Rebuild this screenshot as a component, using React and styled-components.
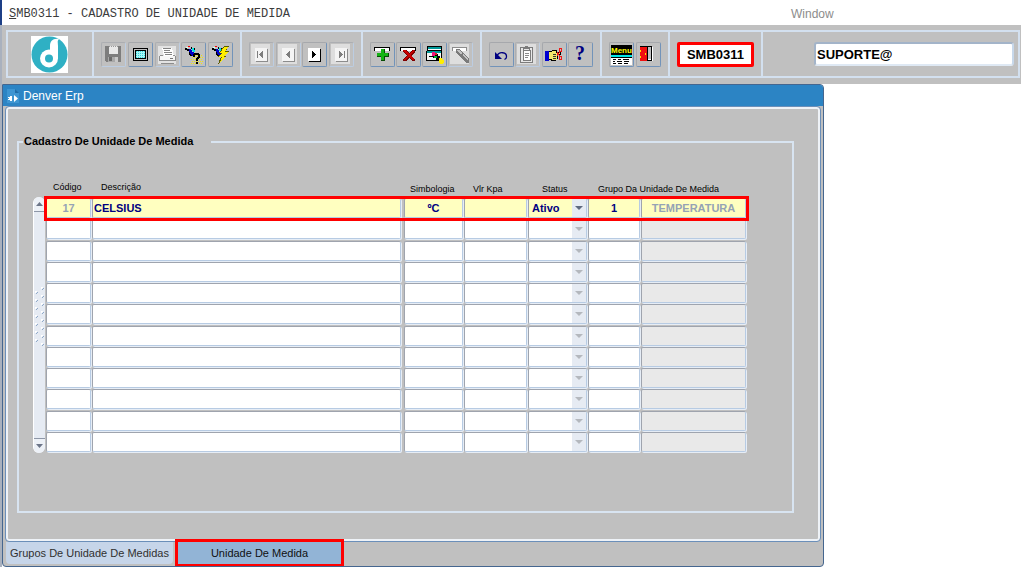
import React from "react";
import styled, { createGlobalStyle, css } from "styled-components";

const GlobalStyle = createGlobalStyle`
    * {
        box-sizing: border-box;
    }
    body {
        margin: 0;
        background: #ffffff;
        color: #000000;
        font-family: "Liberation Sans", Arial, sans-serif;
        font-size: 11px;
    }
    button, input, select {
        font-family: inherit;
        margin: 0;
    }
`;

const Page = styled.div`
    min-height: 100vh;
    border-left: 2px solid #a9b1be;
`;

const MenuBar = styled.header`
    display: grid;
    grid-template-columns: minmax(0, 782fr) minmax(0, 230fr);
    align-items: center;
    height: 25px;
    margin-left: -2px;
    padding: 2px 0 0 7px;
    border-left: 2px solid #1d3f86;
    background: #ffffff;
`;

const ProgramTitle = styled.h1`
    margin: 0;
    font-family: "Liberation Mono", monospace;
    font-size: 12px;
    font-weight: 400;
    line-height: 16px;
    white-space: nowrap;
    color: #3c3c3c;
`;

const WindowMenu = styled.button`
    justify-self: start;
    padding: 0;
    border: 0;
    background: none;
    font-size: 12px;
    line-height: 16px;
    color: #8c8c8c;
`;

const ToolbarArea = styled.div`
    padding: 5px 1px 6px 4px;
    background: #c0c0c0;
`;

const Toolbar = styled.div`
    display: flex;
    height: 48px;
    border: 2px solid #d3e0ef;
    border-left: 0;
`;

const ToolGroup = styled.div`
    display: flex;
    flex: ${props => (props.$grow ? "1 1 0" : "none")};
    width: ${props => (props.$grow ? "auto" : `${props.$width}px`)};
    align-items: center;
    justify-content: ${props => (props.$align ? props.$align : "space-between")};
    padding: 0 ${props => (props.$pad ? props.$pad : 7)}px;
    border-left: 2px solid #d3e0ef;
`;

const ToolButton = styled.button`
    display: flex;
    width: 25px;
    height: 25px;
    padding: 0;
    border: 1px solid;
    border-color: #a6a8ac #7293b9 #7293b9 #a6a8ac;
    border-radius: 2px;
    background: #c0c0c0;
    &:disabled {
        border-color: #acaeb2 #bccde2 #bccde2 #acaeb2;
    }
    svg {
        display: block;
        flex: none;
    }
`;

const ProgramCode = styled.output`
    padding: 2px 7px;
    border: 3px solid #ff0000;
    border-radius: 2px;
    background: #ffffff;
    font-size: 13px;
    font-weight: 700;
    line-height: 15px;
`;

const UserField = styled.input`
    width: 200px;
    height: 24px;
    padding: 0 1px;
    border: 2px solid;
    border-color: #a3b4c9 #c7d8eb #dfe9f4 #a3b4c9;
    border-radius: 3px;
    background: #ffffff;
    font-size: 13px;
    font-weight: 700;
    color: #000000;
`;

const ErpWindow = styled.main`
    width: 100%;
    max-width: 822px;
    border: 1px solid #45668f;
    border-radius: 0 4px 4px 4px;
    background: #c0c0c0;
    overflow: hidden;
`;

const WindowTitle = styled.div`
    display: flex;
    align-items: center;
    height: 21px;
    padding-left: 4px;
    gap: 4px;
    background: #2c84c4;
    color: #ffffff;
    font-size: 12px;
    line-height: 20px;
`;

const Panel = styled.section`
    margin: 0 2px;
    border: 1px solid #6b8fb9;
    border-radius: 4px;
    box-shadow: inset 0 0 0 2px #eef2f7;
    padding: 28px 26px 28px 11px;
`;

const Group = styled.fieldset`
    min-width: 0;
    margin: 0;
    padding: 32px 45px 58px 14px;
    border: 2px solid #d8e4f1;
`;

const GroupTitle = styled.legend`
    margin-left: -10px;
    padding: 0 18px 0 1px;
    font-size: 11px;
    font-weight: 700;
    line-height: 13px;
`;

const GridArea = styled.div`
    display: flex;
    align-items: flex-end;
    gap: 1px;
`;

const ScrollTrack = styled.div`
    display: flex;
    flex: none;
    flex-direction: column;
    align-items: center;
    justify-content: space-between;
    width: 12px;
    height: 256px;
    border-left: 1px solid #ffffff;
    border-radius: 6px;
    background: #e6ebf3;
    overflow: hidden;
    > svg {
        margin-bottom: 16px;
    }
`;

const ScrollButton = styled.button`
    display: flex;
    align-items: center;
    justify-content: center;
    width: 100%;
    height: 15px;
    padding: 0;
    border: 0;
    background: #edf1f7;
    ${props =>
        props.$end
            ? css`
                  border-top: 1px solid #8e97a8;
              `
            : css`
                  border-bottom: 1px solid #8e97a8;
              `}
`;

const Records = styled.table`
    flex: 1 1 0;
    min-width: 0;
    height: 273px;
    border-collapse: collapse;
    table-layout: fixed;
`;

const Heading = styled.th`
    height: 18px;
    padding: 0 0 ${props => (props.$raised ? 5 : 3)}px ${props => props.$indent}px;
    vertical-align: bottom;
    text-align: left;
    font-size: 9px;
    font-weight: 400;
    line-height: 12px;
    white-space: nowrap;
`;

const RecordRow = styled.tr`
    ${props =>
        props.$current &&
        css`
            outline: 3px solid #ff0000;
            outline-offset: -1px;
        `}
`;

const Cell = styled.td`
    padding: 0 ${props => (props.$wide ? 3 : 1)}px 1px 0;
    vertical-align: top;
`;

const fieldBox = css`
    display: block;
    width: 100%;
    height: 20px;
    border: 1px solid;
    border-color: #9fa4ae #b7cbe3 #b7cbe3 #9fa4ae;
    border-radius: 2px;
    box-shadow: 1px 1px 0 #e6edf6;
    font-size: 11px;
    font-weight: 700;
    color: #000080;
`;

const Field = styled.input`
    ${fieldBox}
    padding: 0 1px;
    text-align: ${props => props.$align || "left"};
    background: ${props => (props.$current ? "#ffffc0" : props.$locked ? "#e9e9e9" : "#ffffff")};
    ${props =>
        props.$locked &&
        css`
            color: #95a3b5;
        `}
`;

const SelectBox = styled.div`
    display: grid;
    grid-template-columns: minmax(0, 1fr) 15px;
    align-items: center;
    svg {
        grid-area: 1 / 2;
        pointer-events: none;
    }
`;

const StatusSelect = styled.select`
    ${fieldBox}
    grid-area: 1 / 1 / 2 / 3;
    padding: 0 15px 0 3px;
    appearance: none;
    background: ${props => (props.$current ? "#ffffc0" : "#ffffff")};
`;

const Tabs = styled.nav`
    display: flex;
    align-items: flex-start;
    gap: 5px;
    height: 24px;
    padding: 0 3px;
`;

const Tab = styled.button`
    width: ${props => (props.$active ? 163 : 167)}px;
    height: 22px;
    padding: 0;
    border: 0;
    border-radius: 0 0 4px 4px;
    background: #c6d5e9;
    font-size: 11px;
    line-height: 20px;
    color: #303030;
    white-space: nowrap;
    ${props =>
        props.$active &&
        css`
            border-radius: 0;
            background: #92b4d6;
            color: #101010;
            outline: 3px solid #ff0000;
        `}
`;

const Icon = ({ children, ...rest }) => (
    <svg width="23" height="23" viewBox="1 1 23 23" shapeRendering="crispEdges" aria-hidden="true" {...rest}>
        {children}
    </svg>
);

const Faded = () => <rect x="2" y="2" width="19" height="20" fill="#dedede" />;

const Torch = () => (
    <g>
        <path d="M4 6h2v1h2v1h1v2H8V9H6V8H4z" fill="#000" />
        <path d="M8 7h2v1h1v2h2v2h-1v2H9v-1H8z" fill="#0000c8" />
        <path d="M11 6h2v2h1v2h-2V9h-1z" fill="#00e5e5" />
        <path d="M8 10h1v2h1v1h1v1H9v-1H8zM10 5h1v2h-1zM13 6h1v2h-1z" fill="#000" />
        <rect x="7" y="4" width="2" height="1" fill="#f00" />
        <rect x="5" y="5" width="2" height="1" fill="#dfe" />
    </g>
);

const SaveIcon = () => (
    <Icon>
        <path d="M4 4h15l1 1v15H5l-1-1z" fill="#7d7d7d" />
        <rect x="8" y="4" width="9" height="8" fill="#e8e8e8" />
        <rect x="7" y="15" width="10" height="5" fill="#a8a8a8" />
        <rect x="8" y="15" width="3" height="4" fill="#6b6b6b" />
        <rect x="14" y="15" width="3" height="5" fill="#c8c8c8" />
        <path d="M8 4.500h9" stroke="#999" strokeDasharray="1 1" />
    </Icon>
);

const ScreenIcon = () => (
    <Icon>
        <rect x="5" y="6" width="15" height="13" rx="1" fill="#000" />
        <rect x="6" y="7" width="13" height="11" fill="#c0c0c0" />
        <rect x="7" y="8" width="11" height="9" fill="#000" />
        <rect x="8" y="9" width="9" height="7" fill="#a5f6f6" />
        {[9, 11, 13, 15].map(y => (
            <path key={y} d={`M8 ${y}.5h9`} stroke="#35cfd8" strokeDasharray="1 1" />
        ))}
    </Icon>
);

const PrintIcon = () => (
    <Icon>
        <rect x="3" y="4" width="18" height="18" fill="#e3e3e3" />
        <path d="M7 6h10l2 8H9z" fill="#fff" />
        <path d="M8 6.500h8M9 8.500h6M9 10.500h8M10 12.500h7" stroke="#838383" />
        <path d="M5 14h15v5H5z" fill="#f6f6f6" />
        <path d="M5 13.500h3M18 13.500h2M4.500 14v5M20.500 14v5M5 18.500h15M6 21.500h13" stroke="#8d8d8d" />
        <rect x="15" y="16" width="3" height="1" fill="#777" />
    </Icon>
);

const EnterQueryIcon = () => (
    <Icon>
        {[13, 15, 17, 19, 21].map(y => (
            <path key={y} d={`M${y % 4 === 1 ? 10 : 11} ${y}.5h11`} stroke="#f5ea00" strokeDasharray="1 1" />
        ))}
        <Torch />
        <path d="M12 12h1v-1h5v1h1v4h-1v1h-1v2h-2v-3h1v-1h1v-2h-3v2h-2zM15 20h2v2h-2z" fill="#000" />
    </Icon>
);

const RunQueryIcon = () => (
    <Icon>
        <Torch />
        <path d="M16 4h5l-3 5h3l-4 5h2l-9 8 3-7h-3l3-4h-2z" fill="#5a5a00" />
        <path d="M16 5h4l-3 5h3l-4 5h2l-6 5 2-5h-3l3-4h-2z" fill="#ffee00" />
    </Icon>
);

const NavIcon = ({ path, off }) => (
    <Icon>
        {off && <Faded />}
        <rect x="7" y="7" width="12" height="13" fill={off ? "#8c8c8c" : "#000"} />
        <rect x="6" y="6" width="12" height="13" fill={off ? "#f4f4f4" : "#fff"} />
        <path d={path} fill={off ? "#7d7d7d" : "#000"} />
    </Icon>
);

const Strip = () => (
    <g>
        <rect x="4" y="5" width="16" height="4" fill="#000" />
        <rect x="5" y="6" width="14" height="3" fill="#fff" />
    </g>
);

const InsertIcon = () => (
    <Icon>
        <Strip />
        <path d="M11 7h4v4h4v4h-4v4h-4v-4H7v-4h4z" fill="#064d06" />
        <path d="M11 7h3v4h4v3h-4v4h-3v-4H7v-3h4z" fill="#14b414" />
    </Icon>
);

const DeleteIcon = () => (
    <Icon>
        <Strip />
        <path d="M7 8h3l3 3 3-3h3v2l-4 4 4 4v1h-3l-3-3-3 3H7v-2l4-3-4-4z" fill="#7f0000" />
        <path d="M7 8h2l4 4 4-4h1v1l-4 4 4 4v1h-2l-3-4-4 4H7l5-5-5-4z" fill="#c80000" />
    </Icon>
);

const ClearIcon = () => (
    <Icon>
        <rect x="5" y="4" width="15" height="7" fill="#000" />
        <rect x="6" y="5" width="13" height="2" fill="#009898" />
        <rect x="6" y="7" width="13" height="1" fill="#fff" />
        <rect x="4" y="9" width="16" height="10" fill="#000" />
        <path d="M5 9h14v2H5z" fill="#009898" />
        <path d="M5 11h14v7H5z" fill="#f4f4f4" />
        <path d="M7 14h3v-3h4v1h2v2h2v2h2v3h-3v-1h-3v-2h-3v-1H7z" fill="#000" />
        <rect x="10" y="10" width="3" height="4" fill="#f01080" />
        <rect x="13" y="11" width="2" height="2" fill="#e02020" />
        <rect x="12" y="14" width="3" height="2" fill="#00b030" />
        <path d="M17 16h2l3 2v2l-2 2h-2l-1-3z" fill="#ffee00" />
    </Icon>
);

const PenIcon = () => (
    <Icon>
        <Faded />
        <rect x="4" y="5" width="15" height="4" fill="#8c8c8c" />
        <rect x="5" y="6" width="13" height="3" fill="#fff" />
        <path d="M8 7h4l9 10v4h-3L8 10z" fill="#7a7a7a" />
        <path d="M9 8h2l3 3-1 1-4-3zM14 13l2-1 4 5v2z" fill="#c4c4c4" />
    </Icon>
);

const UndoIcon = () => (
    <Icon shapeRendering="auto">
        <path d="M8 14c2-5 10-4 9.500 1 0 1-1 2-2 2.500" fill="none" stroke="#000080" strokeWidth="1.300" />
        <path d="M6 10v7h7z" fill="#000080" />
    </Icon>
);

const PasteIcon = () => (
    <Icon>
        <Faded />
        <rect x="5" y="5" width="13" height="16" fill="#7c7c7c" />
        <rect x="6" y="6" width="11" height="14" fill="#e8e8e8" />
        <rect x="8" y="8" width="8" height="11" fill="#7c7c7c" />
        <rect x="9" y="9" width="6" height="9" fill="#fff" />
        <path d="M8 6h2V4h3v2h2v3H8z" fill="#7c7c7c" />
        <path d="M9 7h5v1H9z" fill="#e8e8e8" />
        <path d="M10 11.500h4M10 13.500h4M10 15.500h3" stroke="#8a8a8a" />
    </Icon>
);

const CutIcon = () => (
    <Icon>
        <rect x="3" y="9" width="4" height="10" fill="#0000d0" />
        <path d="M7 9h3V8h5v2h4v3h-3v4h-2v2H9v-1H7z" fill="#000" />
        <path d="M7 10h3V9h4v2h4v1h-3v1h1v1h-1v4h-5v-1H7z" fill="#f3e66c" />
        <path d="M11 12.500h3M11 14.500h3M11 16.500h3" stroke="#333" />
        <path d="M17.500 6.500h2v3h-2zM17.500 14.500h2v3h-2zM15 13.500l3-4M15 10.500l3 4" fill="none" stroke="#f01818" />
    </Icon>
);

const HelpIcon = () => (
    <Icon shapeRendering="auto">
        <text x="12" y="18" textAnchor="middle" fontFamily="Liberation Serif, serif" fontSize="20" fontWeight="700" fill="#000080">
            ?
        </text>
    </Icon>
);

const MenuIcon = () => (
    <Icon>
        <rect x="2" y="3" width="21" height="10" fill="#000" />
        <text x="2" y="11" fontFamily="Liberation Sans Narrow, Liberation Sans, sans-serif" fontSize="8" fontWeight="700" fill="#ffff00">
            Menu
        </text>
        <rect x="2" y="13" width="21" height="2" fill="#00e5e5" />
        <rect x="2" y="15" width="21" height="8" fill="#fff" />
        <path d="M2 15.500h21M4 17.500h3M9 17.500h3M14 17.500h6M4 19.500h2M8 19.500h5M15 19.500h5M4 21.500h3M9 21.500h4M15 21.500h4" stroke="#000" />
    </Icon>
);

const ExitIcon = () => (
    <Icon>
        <rect x="4" y="4" width="12" height="15" fill="#000" />
        <rect x="5" y="5" width="10" height="13" fill="#c0c0c0" />
        <path d="M4 5h7v14H4z" fill="#f01010" />
        <rect x="11" y="5" width="1" height="14" fill="#000" />
        <rect x="4" y="8" width="1" height="2" fill="#ffe600" />
        <rect x="4" y="14" width="1" height="2" fill="#ffe600" />
        <rect x="9" y="11" width="1" height="2" fill="#ffe600" />
        <path d="M12 17h3v1h-3zM16 5h1v14h-1z" fill="#fff" />
    </Icon>
);

const Logo = () => (
    <svg width="37" height="37" viewBox="0 0 37 37" role="img" aria-label="Denver">
        <rect width="37" height="37" fill="#fff" />
        <circle cx="18.500" cy="18.500" r="18" fill="#2fb0c4" />
        <circle cx="18" cy="22.500" r="9" fill="#fff" />
        <path d="M28 3c-6-1-9 2-9 7v8l8 5V10c0-4-1-5 1-7z" fill="#fff" />
        <circle cx="18" cy="22.500" r="4" fill="#2fb0c4" />
    </svg>
);

const DocIcon = () => (
    <svg width="12" height="16" viewBox="0 0 12 16" aria-hidden="true">
        <path d="M0 1h8l4 4v10H0z" fill="#3d95d2" />
        <path d="M8 1v4h4z" fill="#1f6ca8" />
        <path d="M7 7l4 3.500L7 14zM5 8v5H3v-1H1v-1h1v-1H1V9h2V8z" fill="#fff" />
    </svg>
);

const Arrow = ({ up, color = "#6c7588" }) => (
    <svg width="7" height="4" viewBox="0 0 7 4" aria-hidden="true">
        <path d={up ? "M0 4h7L3.500 0z" : "M0 0h7L3.500 4z"} fill={color} />
    </svg>
);

const DropMark = ({ on }) => (
    <svg width="14" height="18" viewBox="0 0 14 18" aria-hidden="true">
        <rect width="14" height="18" fill="#e6ebf3" />
        <path d="M3 7h8L7 11z" fill={on ? "#5f6a80" : "#b4b8be"} />
    </svg>
);

const Grip = () => (
    <svg width="9" height="60" viewBox="0 0 9 60" shapeRendering="crispEdges" aria-hidden="true">
        {[0, 1, 2, 3, 4, 5, 6, 7].map(i => (
            <g key={i}>
                <path d={`M6 ${i * 8}h2v1h-1v1h-1z`} fill="#fff" />
                <path d={`M8 ${i * 8 + 1}h1v1h-1v1h-1v-1h1z`} fill="#8fa9c9" />
                {i < 7 && <path d={`M0 ${i * 8 + 4}h2v1h-1v1h-1z`} fill="#fff" />}
                {i < 7 && <path d={`M2 ${i * 8 + 5}h1v1h-1v1h-1v-1h1z`} fill="#8fa9c9" />}
            </g>
        ))}
    </svg>
);

const groups = [
    {
        width: 148,
        tools: [
            { label: "Salvar", icon: <SaveIcon />, off: true },
            { label: "Tela", icon: <ScreenIcon /> },
            { label: "Imprimir", icon: <PrintIcon />, off: true },
            { label: "Entrar consulta", icon: <EnterQueryIcon /> },
            { label: "Executar consulta", icon: <RunQueryIcon /> }
        ]
    },
    {
        width: 121,
        tools: [
            { label: "Primeiro", icon: <NavIcon off path="M8 9h1v7H8zM14 9v7l-4-3v-1z" />, off: true },
            { label: "Anterior", icon: <NavIcon off path="M14 9v7l-4-3v-1z" />, off: true },
            { label: "Próximo", icon: <NavIcon path="M10 9v7l4-3v-1z" /> },
            { label: "Último", icon: <NavIcon off path="M15 9h1v7h-1zM10 9v7l4-3v-1z" />, off: true }
        ]
    },
    {
        width: 119,
        tools: [
            { label: "Inserir", icon: <InsertIcon /> },
            { label: "Excluir", icon: <DeleteIcon /> },
            { label: "Limpar", icon: <ClearIcon /> },
            { label: "Editar", icon: <PenIcon />, off: true }
        ]
    },
    {
        width: 120,
        tools: [
            { label: "Desfazer", icon: <UndoIcon /> },
            { label: "Colar", icon: <PasteIcon />, off: true },
            { label: "Recortar", icon: <CutIcon /> },
            { label: "Ajuda", icon: <HelpIcon /> }
        ]
    },
    {
        width: 68,
        tools: [
            { label: "Menu", icon: <MenuIcon /> },
            { label: "Sair", icon: <ExitIcon /> }
        ]
    }
];

const columns = [
    { key: "codigo", label: "Código", width: 46, indent: 7, raised: true, align: "center", locked: true },
    { key: "descricao", label: "Descrição", indent: 9, raised: true, wide: true },
    { key: "simbologia", label: "Simbologia", width: 60, indent: 6, align: "center" },
    { key: "kpa", label: "Vlr Kpa", width: 64, indent: 9 },
    { key: "status", label: "Status", width: 60, indent: 14 },
    { key: "grupo", label: "Grupo Da Unidade De Medida", width: 53, indent: 10, span: 2, align: "center" },
    { key: "grupoNome", width: 106, align: "center", locked: true }
];

const celsius = {
    codigo: "17",
    descricao: "CELSIUS",
    simbologia: "ºC",
    status: "Ativo",
    grupo: "1",
    grupoNome: "TEMPERATURA"
};

const records = [celsius, ...Array.from({ length: 11 }, () => ({}))];

const Record = ({ record, index }) => {
    const current = index === 0;
    return (
        <RecordRow $current={current}>
            {columns.map(({ key, label, align, locked, wide }) => (
                <Cell key={key} $wide={wide}>
                    {key === "status" ? (
                        <SelectBox>
                            <StatusSelect
                                aria-label={`Status ${index + 1}`}
                                defaultValue={record.status || ""}
                                $current={current}
                            >
                                <option value=""></option>
                                <option value="Ativo">Ativo</option>
                            </StatusSelect>
                            <DropMark on={current} />
                        </SelectBox>
                    ) : (
                        <Field
                            aria-label={`${label || "Nome do grupo"} ${index + 1}`}
                            defaultValue={record[key] || ""}
                            readOnly={locked}
                            $align={align}
                            $locked={locked && (current || key === "grupoNome")}
                            $current={current}
                        />
                    )}
                </Cell>
            ))}
        </RecordRow>
    );
};

const App = () => (
    <>
        <GlobalStyle />
        <Page>
            <MenuBar>
                <ProgramTitle>
                    <u>S</u>MB0311 - CADASTRO DE UNIDADE DE MEDIDA
                </ProgramTitle>
                <WindowMenu type="button">Window</WindowMenu>
            </MenuBar>
            <ToolbarArea>
                <Toolbar>
                    <ToolGroup $width={86} $align="flex-start" $pad={23}>
                        <Logo />
                    </ToolGroup>
                    {groups.map(({ width, tools }) => (
                        <ToolGroup key={tools[0].label} $width={width}>
                            {tools.map(({ label, icon, off }) => (
                                <ToolButton key={label} type="button" aria-label={label} disabled={off}>
                                    {icon}
                                </ToolButton>
                            ))}
                        </ToolGroup>
                    ))}
                    <ToolGroup $width={93} $align="center">
                        <ProgramCode>SMB0311</ProgramCode>
                    </ToolGroup>
                    <ToolGroup $grow $align="flex-end" $pad={4}>
                        <UserField aria-label="Usuário" defaultValue="SUPORTE@" />
                    </ToolGroup>
                </Toolbar>
            </ToolbarArea>
            <ErpWindow>
                <WindowTitle>
                    <DocIcon />
                    Denver Erp
                </WindowTitle>
                <Panel>
                    <Group>
                        <GroupTitle>Cadastro De Unidade De Medida</GroupTitle>
                        <GridArea>
                            <ScrollTrack>
                                <ScrollButton type="button" aria-label="Subir">
                                    <Arrow up />
                                </ScrollButton>
                                <Grip />
                                <ScrollButton type="button" aria-label="Descer" $end>
                                    <Arrow />
                                </ScrollButton>
                            </ScrollTrack>
                            <Records>
                                <colgroup>
                                    {columns.map(({ key, width }) => (
                                        <col key={key} width={width} />
                                    ))}
                                </colgroup>
                                <thead>
                                    <tr>
                                        {columns
                                            .filter(({ label }) => label)
                                            .map(({ key, label, span, indent, raised }) => (
                                                <Heading key={key} colSpan={span} $indent={indent} $raised={raised}>
                                                    {label}
                                                </Heading>
                                            ))}
                                    </tr>
                                </thead>
                                <tbody>
                                    {records.map((record, index) => (
                                        <Record key={index} record={record} index={index} />
                                    ))}
                                </tbody>
                            </Records>
                        </GridArea>
                    </Group>
                </Panel>
                <Tabs>
                    <Tab type="button">Grupos De Unidade De Medidas</Tab>
                    <Tab type="button" $active>
                        Unidade De Medida
                    </Tab>
                </Tabs>
            </ErpWindow>
        </Page>
    </>
);

export default App;
